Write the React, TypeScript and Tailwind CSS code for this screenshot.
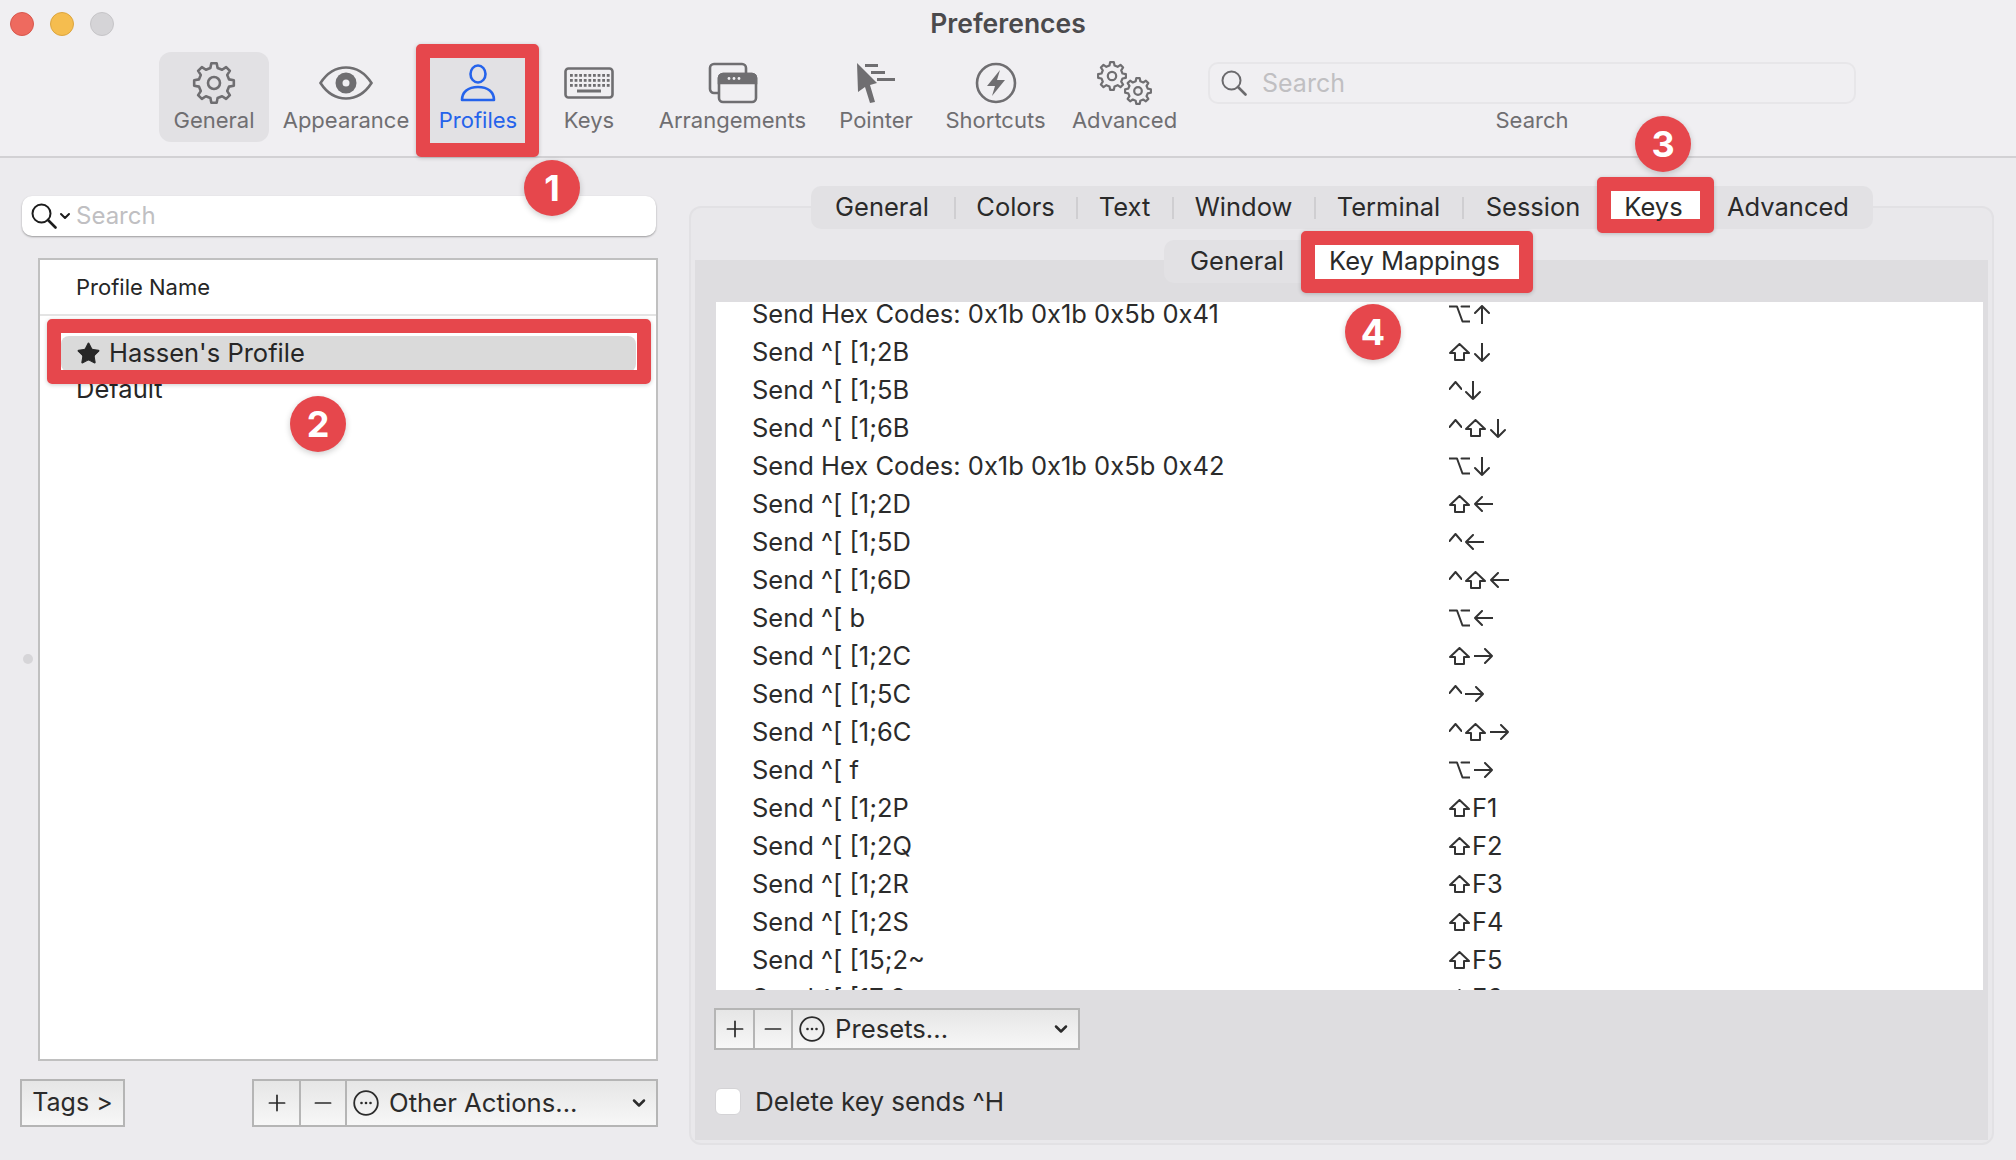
import React from "react";
import { ChevronDown, Minus, Plus, Star } from "lucide-react";

type Glyph = "opt" | "shift" | "ctrl" | "up" | "down" | "left" | "right";

const MAPPINGS: { action: string; keys: Glyph[]; fn?: string }[] = [
  { action: "Send Hex Codes: 0x1b 0x1b 0x5b 0x41", keys: ["opt", "up"] },
  { action: "Send ^[ [1;2B", keys: ["shift", "down"] },
  { action: "Send ^[ [1;5B", keys: ["ctrl", "down"] },
  { action: "Send ^[ [1;6B", keys: ["ctrl", "shift", "down"] },
  { action: "Send Hex Codes: 0x1b 0x1b 0x5b 0x42", keys: ["opt", "down"] },
  { action: "Send ^[ [1;2D", keys: ["shift", "left"] },
  { action: "Send ^[ [1;5D", keys: ["ctrl", "left"] },
  { action: "Send ^[ [1;6D", keys: ["ctrl", "shift", "left"] },
  { action: "Send ^[ b", keys: ["opt", "left"] },
  { action: "Send ^[ [1;2C", keys: ["shift", "right"] },
  { action: "Send ^[ [1;5C", keys: ["ctrl", "right"] },
  { action: "Send ^[ [1;6C", keys: ["ctrl", "shift", "right"] },
  { action: "Send ^[ f", keys: ["opt", "right"] },
  { action: "Send ^[ [1;2P", keys: ["shift"], fn: "F1" },
  { action: "Send ^[ [1;2Q", keys: ["shift"], fn: "F2" },
  { action: "Send ^[ [1;2R", keys: ["shift"], fn: "F3" },
  { action: "Send ^[ [1;2S", keys: ["shift"], fn: "F4" },
  { action: "Send ^[ [15;2~", keys: ["shift"], fn: "F5" },
  { action: "Send ^[ [17;2~", keys: ["shift"], fn: "F6" },
];

const GLYPHS: Record<Glyph, { w: number; h: number; d: string }> = {
  opt: { w: 21, h: 18, d: "M0.5 1.5H8L13.5 16.5H20.5M12.5 1.5H20.5" },
  shift: { w: 21, h: 18, d: "M10.5 1L20 10H15V17H6V10H1Z" },
  ctrl: { w: 13, h: 18, d: "M0.5 8L6.5 1L12.5 8" },
  up: { w: 16, h: 19, d: "M8 1V19M1 8L8 1L15 8" },
  down: { w: 16, h: 19, d: "M8 0V18M1 11L8 18L15 11" },
  left: { w: 19, h: 16, d: "M1 8H19M8 1L1 8L8 15" },
  right: { w: 19, h: 16, d: "M0 8H18M11 1L18 8L11 15" },
};

function KeyGlyph({ name }: { name: Glyph }) {
  const g = GLYPHS[name];
  return (
    <svg
      width={g.w}
      height={g.h}
      viewBox={`0 0 ${g.w} ${g.h}`}
      fill="none"
      stroke="#333"
      strokeWidth="2"
      strokeLinejoin="round"
      strokeLinecap="round"
      className={name === "ctrl" ? "mr-[3px]" : "mr-[4px]"}
    >
      <path d={g.d} />
    </svg>
  );
}

// outline of a cog, teeth are worked out from the radius
function gearPath(cx: number, cy: number, outer: number, inner: number, teeth: number) {
  const pts: string[] = [];
  const step = (Math.PI * 2) / teeth;
  for (let i = 0; i < teeth; i++) {
    const a = i * step - Math.PI / 2;
    const offs: [number, number][] = [
      [-0.3, inner],
      [-0.17, outer],
      [0.17, outer],
      [0.3, inner],
    ];
    offs.forEach(([o, r]) => {
      const t = a + o * step;
      pts.push(`${(cx + Math.cos(t) * r).toFixed(2)} ${(cy + Math.sin(t) * r).toFixed(2)}`);
    });
  }
  return `M${pts.join("L")}Z`;
}

function GearIcon() {
  return (
    <svg width="44" height="44" viewBox="0 0 44 44" fill="none" stroke="#6f6e71" strokeWidth="2.6" strokeLinejoin="round">
      <path d={gearPath(22, 22, 20, 15.5, 8)} />
      <circle cx="22" cy="22" r="6" />
    </svg>
  );
}

function EyeIcon() {
  return (
    <svg width="54" height="34" viewBox="0 0 54 34">
      <path d="M1.5 17C8 7 17 1.5 27 1.5S46 7 52.5 17C46 27 37 32.5 27 32.5S8 27 1.5 17Z" fill="none" stroke="#6f6e71" strokeWidth="2.6" />
      <circle cx="27" cy="17" r="10.5" fill="#6f6e71" />
      <circle cx="27" cy="17" r="3.5" fill="#f0eff2" />
    </svg>
  );
}

function PersonIcon() {
  return (
    <svg width="36" height="38" viewBox="0 0 36 38" fill="none" stroke="#2563eb" strokeWidth="2.6">
      <ellipse cx="18" cy="10" rx="7.5" ry="8.5" />
      <path d="M2 36C2 28 8 23 18 23S34 28 34 36Z" strokeLinejoin="round" />
    </svg>
  );
}

function KeyboardIcon() {
  const row = (y: number, n: number, start: number) =>
    Array.from({ length: n }).map((_, i) => <rect key={`${y}-${i}`} x={start + i * 4.6} y={y} width="2.8" height="2.8" fill="#6f6e71" />);
  return (
    <svg width="50" height="32" viewBox="0 0 50 32">
      <rect x="1.5" y="1.5" width="47" height="29" rx="3" fill="none" stroke="#6f6e71" strokeWidth="2.6" />
      {row(7, 9, 6)}
      {row(12, 9, 6)}
      {row(17, 9, 6)}
      <rect x="13" y="22.5" width="24" height="3" fill="#6f6e71" />
    </svg>
  );
}

function ArrangeIcon() {
  return (
    <svg width="50" height="42" viewBox="0 0 50 42" fill="none" stroke="#6f6e71" strokeWidth="2.6">
      <path d="M10 31H6A4 4 0 0 1 2 27V6A4 4 0 0 1 6 2H34A4 4 0 0 1 38 6V11" />
      <rect x="11" y="12" width="37" height="28" rx="4" />
      <path d="M15 12H44A4 4 0 0 1 48 16V21H11V16A4 4 0 0 1 15 12Z" fill="#6f6e71" />
      <circle cx="21" cy="16.5" r="1.4" fill="#f0eff2" stroke="none" />
      <circle cx="26" cy="16.5" r="1.4" fill="#f0eff2" stroke="none" />
      <circle cx="31" cy="16.5" r="1.4" fill="#f0eff2" stroke="none" />
    </svg>
  );
}

function PointerIcon() {
  return (
    <svg width="40" height="42" viewBox="0 0 40 42" fill="#6f6e71">
      <path d="M1 1L21 21L14 23L19 40L14 41L9 25L2 30Z" />
      <rect x="9" y="2" width="13" height="3" />
      <rect x="15" y="9" width="14" height="3" />
      <rect x="21" y="16" width="18" height="3" />
    </svg>
  );
}

function BoltIcon() {
  return (
    <svg width="42" height="42" viewBox="0 0 42 42">
      <ellipse cx="21" cy="21" rx="19" ry="19" fill="none" stroke="#6f6e71" strokeWidth="2.6" />
      <path d="M25 8L12 24H20L17 34L30 18H22Z" fill="#6f6e71" />
    </svg>
  );
}

function GearsIcon() {
  return (
    <svg width="56" height="44" viewBox="0 0 56 44" fill="none" stroke="#6f6e71" strokeWidth="2.2" strokeLinejoin="round">
      <path d={gearPath(15, 15, 14, 10.8, 8)} />
      <circle cx="15" cy="15" r="4.2" />
      <path d={gearPath(41, 30, 13, 10, 8)} />
      <circle cx="41" cy="30" r="3.8" />
    </svg>
  );
}

function Magnifier({ color }: { color: string }) {
  return (
    <svg width="26" height="26" viewBox="0 0 26 26" fill="none" stroke={color} strokeWidth="2">
      <circle cx="10.5" cy="10.5" r="9" />
      <path d="M17 17L24.5 24.5" strokeWidth="2.6" strokeLinecap="round" />
    </svg>
  );
}

function DotsCircle() {
  return (
    <svg width="26" height="26" viewBox="0 0 26 26">
      <circle cx="13" cy="13" r="11.8" fill="none" stroke="#2b2b2b" strokeWidth="1.8" />
      <circle cx="8.5" cy="13" r="1.3" fill="#2b2b2b" />
      <circle cx="13" cy="13" r="1.3" fill="#2b2b2b" />
      <circle cx="17.5" cy="13" r="1.3" fill="#2b2b2b" />
    </svg>
  );
}

function Badge({ n, className }: { n: number; className: string }) {
  return (
    <div className={`absolute z-20 flex h-[56px] w-[56px] items-center justify-center rounded-full bg-[#e6474c] text-[36px] font-bold text-white shadow-[0_2px_6px_rgba(0,0,0,0.2)] ${className}`}>
      {n}
    </div>
  );
}

function ToolItem({ label, width, icon, active }: { label: string; width: string; icon: React.ReactNode; active?: boolean }) {
  return (
    <div className={`flex h-[90px] shrink-0 flex-col items-center rounded-xl ${width} ${active ? "bg-[#e2e1e4]" : ""}`}>
      <div className="mt-[9px] flex h-[44px] items-center justify-center">{icon}</div>
      <div className="mt-[3px] text-[22px] leading-[24px] text-[#6f6e71]">{label}</div>
    </div>
  );
}

function ActionGroup({ label, widths, className }: { label: string; widths: string[]; className: string }) {
  return (
    <div className={`flex border-2 border-[#b5b5b5] bg-gradient-to-b from-[#e6e6e6] to-[#f7f7f7] text-[#2b2b2b] ${className}`}>
      <div className={`flex items-center justify-center border-r-2 border-[#b5b5b5] ${widths[0]}`}>
        <Plus size={26} strokeWidth={1.6} />
      </div>
      <div className={`flex items-center justify-center border-r-2 border-[#b5b5b5] ${widths[1]}`}>
        <Minus size={26} strokeWidth={1.6} />
      </div>
      <div className="flex flex-1 items-center pl-[6px] pr-[7px]">
        <DotsCircle />
        <span className="ml-[10px] flex-1">{label}</span>
        <ChevronDown size={20} strokeWidth={3} />
      </div>
    </div>
  );
}

const TABS = [
  { label: "General", w: "w-[143px]", sep: true },
  { label: "Colors", w: "w-[120px]", sep: true },
  { label: "Text", w: "w-[94px]", sep: true },
  { label: "Window", w: "w-[140px]", sep: true },
  { label: "Terminal", w: "w-[146px]", sep: true },
  { label: "Session", w: "w-[139px]", sep: false },
  { label: "Keys", w: "w-[102px]", sep: false },
  { label: "Advanced", w: "w-[167px]", sep: false },
];

export default function App() {
  return (
    <div className="relative h-[1160px] w-[2016px] overflow-hidden bg-[#ecebee] font-['Inter','Liberation_Sans',sans-serif]">
      {/* window chrome and toolbar */}
      <div className="h-[158px] border-b-2 border-[#d2d1d4] bg-[#f0eff2]">
        <div className="relative flex h-[52px] items-start pl-[10px] pt-[12px]">
          <div className="flex gap-[16px]">
            <div className="h-[24px] w-[24px] rounded-full border border-[#d8574d] bg-[#ee6a5f]" />
            <div className="h-[24px] w-[24px] rounded-full border border-[#dca53f] bg-[#f5bd4f]" />
            <div className="h-[24px] w-[24px] rounded-full border border-[#c6c5c8] bg-[#d5d4d7]" />
          </div>
          <div className="absolute inset-x-0 top-[8px] text-center text-[26.5px] font-semibold leading-[30px] text-[#4b4a4d]">Preferences</div>
        </div>
        <div className="flex pl-[159px]">
          <ToolItem label="General" width="w-[110px]" icon={<GearIcon />} active />
          <ToolItem label="Appearance" width="w-[154px]" icon={<EyeIcon />} />
          <div className="relative h-[90px] w-[110px] shrink-0">
            <div className="absolute -bottom-[15px] -left-[7px] -right-[6px] -top-[8px] rounded-[5px] border-[14px] border-[#e6474c] bg-[#e2e1e4] shadow-[0_1px_4px_rgba(0,0,0,0.2)]" />
            <div className="relative flex h-[90px] flex-col items-center">
              <div className="mt-[9px] flex h-[44px] items-center justify-center"><PersonIcon /></div>
              <div className="mt-[3px] text-[22px] leading-[24px] text-[#2563eb]">Profiles</div>
            </div>
          </div>
          <ToolItem label="Keys" width="w-[112px]" icon={<KeyboardIcon />} />
          <ToolItem label="Arrangements" width="w-[175px]" icon={<ArrangeIcon />} />
          <ToolItem label="Pointer" width="w-[112px]" icon={<PointerIcon />} />
          <ToolItem label="Shortcuts" width="w-[127px]" icon={<BoltIcon />} />
          <ToolItem label="Advanced" width="w-[131px]" icon={<GearsIcon />} />
          <div className="ml-[18px] flex w-[648px] flex-col items-center">
            <div className="mt-[10px] flex h-[42px] w-full items-center rounded-[10px] border-2 border-[#e7e6e9] pl-[11px] text-[25px] text-[#c0bfc2]">
              <Magnifier color="#6b6a6d" />
              <span className="ml-[15px] pt-[2px]">Search</span>
            </div>
            <div className="mt-[4px] text-[22px] leading-[24px] text-[#6f6e71]">Search</div>
          </div>
        </div>
      </div>

      <div className="flex">
        {/* profile list */}
        <div className="w-[689px] shrink-0">
          <div className="ml-[22px] mt-[38px] flex h-[40px] w-[634px] items-center rounded-[10px] bg-white pl-[9px] text-[24px] text-[#c0bfc2] shadow-[0_1px_2px_rgba(0,0,0,0.35)]">
            <Magnifier color="#1c1c1c" />
            <ChevronDown size={16} strokeWidth={3} className="text-[#1c1c1c]" />
            <span className="ml-[3px]">Search</span>
          </div>
          <div className="ml-[38px] mt-[22px] h-[803px] w-[620px] border-2 border-[#c0c0c0] bg-white text-[#262626]">
            <div className="flex h-[54px] items-center pl-[36px] text-[22px]">Profile Name</div>
            <div className="h-[2px] bg-[#e4e4e4]" />
            <div className="relative ml-[21px] mt-[20px] flex h-[36px] w-[575px] items-center rounded-lg bg-[#dadada] pb-[2px] pl-[15px] text-[25.5px]">
              <Star size={25} fill="#262626" strokeWidth={1} />
              <span className="ml-[8px]">Hassen's Profile</span>
              <div className="absolute -bottom-[12px] -left-[14px] -right-[15px] -top-[17px] z-10 rounded-[5px] border-[14px] border-[#e6474c] shadow-[0_1px_4px_rgba(0,0,0,0.2)]" />
            </div>
            <div className="flex h-[34px] items-center pl-[36px] text-[25.5px]">Default</div>
          </div>
          <div className="ml-[20px] mt-[18px] flex w-[638px] justify-between">
            <div className="flex h-[48px] w-[105px] items-center justify-center border-2 border-[#b5b5b5] bg-gradient-to-b from-[#e6e6e6] to-[#f7f7f7] text-[25px] text-[#2b2b2b]">Tags &gt;</div>
            <ActionGroup label="Other Actions..." widths={["w-[47px]", "w-[46px]"]} className="h-[48px] w-[406px] text-[25.7px]" />
          </div>
        </div>

        {/* settings panel */}
        <div className="mt-[48px] flow-root h-[939px] w-[1305px] rounded-xl border-2 border-[#e2e1e4] bg-[#e9e8eb] px-[4px] pb-[3px]">
          <div className="mx-auto -mt-[22px] flex h-[43px] w-[1062px] items-center rounded-[10px] bg-[#e2e1e4] text-[25.5px] text-[#2a2a2a]">
            {TABS.map((t) => (
              <React.Fragment key={t.label}>
                <div className={`relative flex h-full items-center justify-center ${t.w}`}>
                  {t.label === "Keys" && (
                    <div className="absolute -bottom-[4px] -left-[6px] -right-[9px] -top-[9px] rounded-[5px] border-[14px] border-[#e6474c] bg-white shadow-[0_1px_4px_rgba(0,0,0,0.2)]" />
                  )}
                  <span className="relative">{t.label}</span>
                </div>
                {t.sep && <div className="h-[22px] w-[2px] bg-[#cfced1]" />}
              </React.Fragment>
            ))}
          </div>
          <div className="mt-[31px] flow-root h-[880px] bg-[#dedde0]">
            <div className="mx-auto -mt-[20px] flex h-[43px] w-[355px] items-center rounded-[10px] bg-[#e2e1e4] text-[25.5px] text-[#2a2a2a]">
              <div className="flex w-[146px] justify-center">General</div>
              <div className="relative flex h-full w-[209px] items-center justify-center">
                <div className="absolute -bottom-[10px] -left-[9px] -right-[14px] -top-[9px] rounded-[5px] border-[14px] border-[#e6474c] bg-white shadow-[0_1px_4px_rgba(0,0,0,0.2)]" />
                <span className="relative">Key Mappings</span>
              </div>
            </div>
            <div className="ml-[21px] mr-[5px] mt-[19px] h-[688px] overflow-hidden bg-white text-[25.5px] leading-[28px] text-[#2b2b2b]">
              <div className="-mt-[7px]">
                {MAPPINGS.map((m) => (
                  <div key={m.action} className="flex h-[38px] items-center pl-[36px]">
                    <div className="w-[697px] shrink-0">{m.action}</div>
                    <div className="flex items-center">
                      {m.keys.map((k, i) => (
                        <KeyGlyph key={i} name={k} />
                      ))}
                      {m.fn && <span className="-ml-[2px]">{m.fn}</span>}
                    </div>
                  </div>
                ))}
              </div>
            </div>
            <ActionGroup label="Presets..." widths={["w-[39px]", "w-[38px]"]} className="ml-[19px] mt-[18px] h-[42px] w-[366px] text-[25.7px]" />
            <div className="ml-[20px] mt-[38px] flex h-[27px] items-center text-[26px] text-[#2b2b2b]">
              <div className="h-[27px] w-[26px] rounded-[6px] border border-[#d4d3d6] bg-white" />
              <span className="ml-[14px]">Delete key sends ^H</span>
            </div>
          </div>
        </div>
      </div>

      <div className="absolute left-[23px] top-[654px] h-[10px] w-[10px] rounded-full bg-[#d6d5d8]" />

      <Badge n={1} className="left-[524px] top-[160px]" />
      <Badge n={2} className="left-[290px] top-[396px]" />
      <Badge n={3} className="left-[1635px] top-[116px]" />
      <Badge n={4} className="left-[1345px] top-[304px]" />
    </div>
  );
}
